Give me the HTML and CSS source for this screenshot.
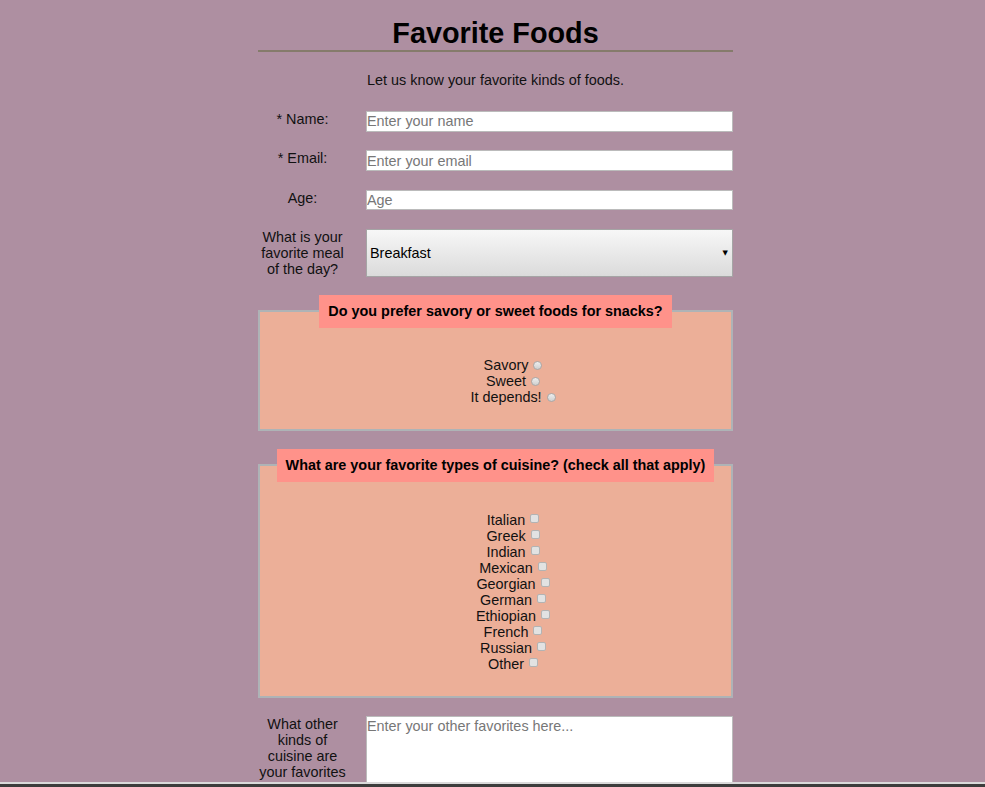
FILE: index.html
```html
<!DOCTYPE html>
<html>
<head>
  <title>Favorite Foods</title>
  <link rel="stylesheet" href="styles.css">
</head>
<body>

<div class="page">
  <h1>Favorite Foods</h1>
  <p class="intro">Let us know your favorite kinds of foods.</p>

  <form>
    <div class="row">
      <label for="name">* Name:</label>
      <input id="name" type="text" placeholder="Enter your name">
    </div>
    <div class="row">
      <label for="email">* Email:</label>
      <input id="email" type="email" placeholder="Enter your email">
    </div>
    <div class="row">
      <label for="age">Age:</label>
      <input id="age" type="number" placeholder="Age">
    </div>
    <div class="row">
      <label for="meal">What is your favorite meal of the day?</label>
      <div class="select-wrap">
        <select id="meal">
          <option>Breakfast</option>
          <option>Lunch</option>
          <option>Dinner</option>
        </select>
      </div>
    </div>

    <fieldset class="snacks">
      <legend>Do you prefer savory or sweet foods for snacks?</legend>
      <ul class="choices">
        <li><label>Savory <input type="radio" name="snack" value="savory"></label></li>
        <li><label>Sweet <input type="radio" name="snack" value="sweet"></label></li>
        <li><label>It depends! <input type="radio" name="snack" value="depends"></label></li>
      </ul>
    </fieldset>

    <fieldset class="cuisine">
      <legend>What are your favorite types of cuisine? (check all that apply)</legend>
      <ul class="choices">
        <li><label>Italian <input type="checkbox" value="italian"></label></li>
        <li><label>Greek <input type="checkbox" value="greek"></label></li>
        <li><label>Indian <input type="checkbox" value="indian"></label></li>
        <li><label>Mexican <input type="checkbox" value="mexican"></label></li>
        <li><label>Georgian <input type="checkbox" value="georgian"></label></li>
        <li><label>German <input type="checkbox" value="german"></label></li>
        <li><label>Ethiopian <input type="checkbox" value="ethiopian"></label></li>
        <li><label>French <input type="checkbox" value="french"></label></li>
        <li><label>Russian <input type="checkbox" value="russian"></label></li>
        <li><label>Other <input type="checkbox" value="other"></label></li>
      </ul>
    </fieldset>

    <div class="row">
      <label for="other">What other kinds of cuisine are your favorites</label>
      <textarea id="other" placeholder="Enter your other favorites here..."></textarea>
    </div>
  </form>
</div>

<footer class="footer"></footer>

</body>
</html>
```

FILE: styles.css
```css
body {
  margin: 0;
  padding: 0 0 0 6px;
  background-color: #ae8fa1;
  font-family: "Liberation Sans", Arial, sans-serif;
  font-size: 14.4px;
  color: #111;
}
.page {
  width: 475px;
  margin: 0 auto;
}
h1 {
  margin: 17px 0 0;
  font-size: 28.8px;
  text-align: center;
  color: #000;
  border-bottom: 2px solid #857b6b;
}
.intro {
  margin: 20px 0 22px;
  text-align: center;
}
.row {
  display: flex;
  align-items: flex-start;
  margin-bottom: 17.8px;
}
.row > label {
  width: 89px;
  margin-right: 19px;
  padding-top: 1px;
  text-align: center;
}
.row input,
.row textarea {
  box-sizing: border-box;
  width: 367px;
  margin: 1px 0 0;
  padding: 1px 0;
  border: 1px solid #bbb;
  background: #fff;
  font: inherit;
  color: #000;
}
.row input {
  height: 20.5px;
}
.row textarea {
  height: 100px;
}
input::placeholder,
textarea::placeholder {
  color: #777;
}
input[type=number] {
  -moz-appearance: textfield;
}
input[type=number]::-webkit-inner-spin-button {
  -webkit-appearance: none;
}
.select-wrap {
  position: relative;
  margin-top: 1px;
}
.select-wrap select {
  -webkit-appearance: none;
  appearance: none;
  width: 367px;
  height: 48px;
  padding: 0 3px;
  border: 1px solid #a5a5a5;
  border-radius: 0;
  background: linear-gradient(#f7f7f7, #dbdbdb);
  font: inherit;
  color: #000;
}
.select-wrap::after {
  content: "\25BC";
  position: absolute;
  right: 5px;
  top: 50%;
  transform: translateY(-50%);
  font-family: "DejaVu Sans", sans-serif;
  font-size: 7px;
  line-height: 1;
  color: #000;
  pointer-events: none;
}
fieldset {
  margin: 0 0 18px;
  border: 2px solid #aeb3b6;
  background-color: #ecaf98;
  min-width: 0;
}
.snacks {
  margin-top: 1px;
  padding: 29px 0 24px;
}
.cuisine {
  margin-bottom: 17px;
  padding: 30px 0 24px;
}
legend {
  margin: 0 auto;
  padding: 8.5px 9px;
  background-color: #ff928a;
  font-weight: bold;
  color: #000;
}
.choices {
  list-style: none;
  margin: 0;
  padding: 0 0 0 35px;
  text-align: center;
  line-height: 16px;
}
.choices input {
  -webkit-appearance: none;
  appearance: none;
  box-sizing: border-box;
  width: 9px;
  height: 9px;
  margin: 0 0 0 1px;
  vertical-align: baseline;
}
.choices input[type=radio] {
  border: 1px solid #a9a9a9;
  border-radius: 50%;
  background: linear-gradient(#eeeeee, #cfcfcf);
}
.choices input[type=checkbox] {
  margin-bottom: 1.5px;
  border: 1px solid #b3b3b3;
  border-radius: 2px;
  background: #e2e2e2;
}
.footer {
  position: fixed;
  left: 0;
  right: 0;
  bottom: 0;
  height: 3px;
  border-top: 2px solid #dadada;
  background-color: #3c3d3c;
}
```
